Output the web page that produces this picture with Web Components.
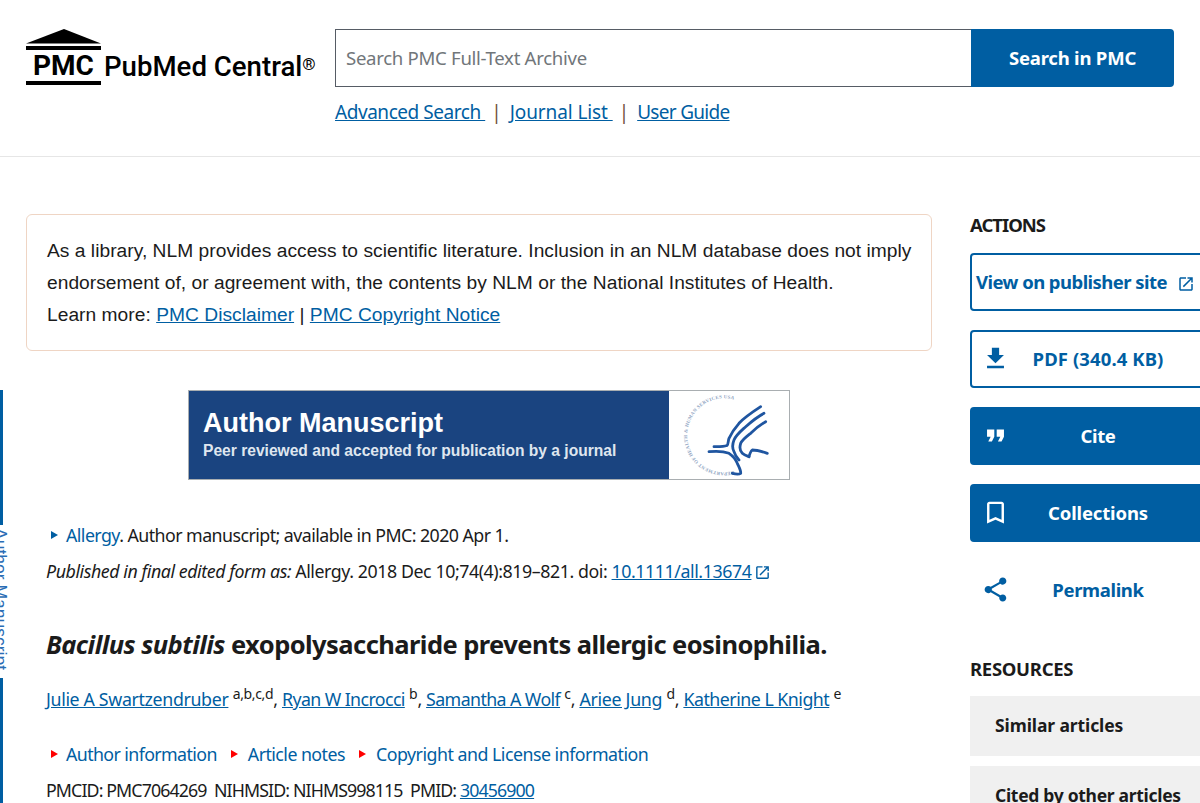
<!DOCTYPE html>
<html lang="en">
<head>
<meta charset="utf-8">
<title>PMC</title>
<style>
	html, body {
		margin: 0;
		height: 803px;
		overflow: hidden;
		background: #fff;
		color: #1b1b1b;
		font-family: "Noto Sans", sans-serif;
	}
</style>
</head>
<body>
<pmc-header></pmc-header>
<pmc-page>
	<pmc-notice></pmc-notice>
	<pmc-banner></pmc-banner>
	<pmc-article></pmc-article>
	<pmc-sidebar slot="side"></pmc-sidebar>
</pmc-page>

<script>
const icons = {
	launch: 'M19 19H5V5h7V3H5c-1.11 0-2 .9-2 2v14c0 1.1.89 2 2 2h14c1.1 0 2-.9 2-2v-7h-2v7zM14 3v2h3.59l-9.83 9.83 1.41 1.41L19 6.41V10h2V3h-7z',
	download: 'M19 9h-4V3H9v6H5l7 7 7-7zM5 18v2h14v-2H5z',
	quote: 'M6 17h3l2-4V7H5v6h3zm8 0h3l2-4V7h-6v6h3z',
	bookmark: 'M17 3H7c-1.1 0-1.99.9-1.99 2L5 21l7-3 7 3V5c0-1.1-.9-2-2-2zm0 15l-5-2.18L7 18V5h10v13z',
	share: 'M18 16.08c-.76 0-1.44.3-1.96.77L8.91 12.7c.05-.23.09-.46.09-.7s-.04-.47-.09-.7l7.05-4.11c.54.5 1.25.81 2.04.81 1.66 0 3-1.34 3-3s-1.34-3-3-3-3 1.34-3 3c0 .24.04.47.09.7L8.04 9.81C7.5 9.31 6.79 9 6 9c-1.66 0-3 1.34-3 3s1.34 3 3 3c.79 0 1.5-.31 2.04-.81l7.12 4.16c-.05.21-.08.43-.08.65 0 1.61 1.31 2.92 2.92 2.92 1.61 0 2.92-1.31 2.92-2.92s-1.31-2.92-2.92-2.92z'
};

const svgIcon = (name, size) =>
	`<svg width="${size}" height="${size}" viewBox="0 0 24 24" fill="currentColor"><path d="${icons[name]}"/></svg>`;

const sans = '"Noto Sans", sans-serif';

class PmcElement extends HTMLElement {
	constructor() {
		super();
		this.attachShadow({ mode: 'open' });
		this.shadowRoot.innerHTML = this.constructor.markup;
	}
}

class PmcLogo extends PmcElement {
	static markup = `
		<style>
			:host { display: flex; align-items: flex-start; width: 300px; color: #000; font-family: Roboto, sans-serif; }
			.mark { display: flex; flex-direction: column; align-items: center; width: 75px; }
			svg { display: block; }
			.pmc { font-size: 28px; font-weight: 700; line-height: 30px; margin-top: 1px; }
			.name { font-size: 27.600px; font-weight: 500; line-height: 30px; margin: 23px 0 0 3px; white-space: nowrap; }
			sup { font-size: 17px; font-weight: 400; line-height: 0; vertical-align: 6px; }
		</style>
		<div class="mark">
			<svg width="75" height="21" viewBox="0 0 75 21"><path d="M0 14.500 38 0 75 14.500z"/><rect y="17" width="75" height="4"/></svg>
			<div class="pmc">PMC</div>
			<svg width="75" height="4" viewBox="0 0 75 4"><rect width="75" height="4"/></svg>
		</div>
		<div class="name">PubMed Central<sup>®</sup></div>
	`;
}

class PmcSearch extends PmcElement {
	static markup = `
		<style>
			:host { display: block; width: 839px; font-family: ${sans}; }
			form { display: flex; height: 58px; margin: 0; }
			input {
				flex: 1; min-width: 0; box-sizing: border-box; height: 58px; border: 1px solid #565c65; border-right: 0;
				padding: 0 10px 2px; font: 18.600px ${sans}; letter-spacing: -.3px; color: #1b1b1b; outline: 0; border-radius: 0;
			}
			input::placeholder { color: #71767a; opacity: 1; }
			button {
				width: 203px; border: 0; background: #005ea2; color: #fff; border-radius: 0 4px 4px 0;
				font: 700 18.500px ${sans}; letter-spacing: -.2px; padding: 0 0 2px;
			}
			nav { display: flex; align-items: center; margin-top: 12px; font-size: 19px; line-height: 27px; letter-spacing: -.45px; }
			a { color: #005ea2; text-decoration: underline; white-space: pre; }
			a.j { letter-spacing: -.1px; }
			a.g { letter-spacing: -.7px; }
			i { font-style: normal; color: #71503c; margin: 0 8px 0 6px; letter-spacing: 0; }
		</style>
		<form><input placeholder="Search PMC Full-Text Archive"><button type="button">Search in PMC</button></form>
		<nav><a>Advanced Search </a><i>|</i><a class="j">Journal List </a><i>|</i><a class="g">User Guide</a></nav>
	`;
}

class PmcHeader extends PmcElement {
	static markup = `
		<style>
			:host { display: flex; align-items: flex-start; box-sizing: border-box; height: 157px; padding: 29px 0 0 26px; border-bottom: 1px solid #e6e6e6; }
			pmc-search { margin-left: 9px; }
		</style>
		<pmc-logo></pmc-logo>
		<pmc-search></pmc-search>
	`;
}

class PmcPage extends PmcElement {
	static markup = `
		<style>
			:host { display: grid; grid-template-columns: 906px 256px; column-gap: 38px; padding: 57px 0 0 26px; position: relative; }
			.rail { position: absolute; left: 0; top: 233px; }
			.left { min-width: 0; }
		</style>
		<pmc-rail class="rail"></pmc-rail>
		<div class="left"><slot></slot></div>
		<slot name="side"></slot>
	`;
}

class PmcRail extends PmcElement {
	static markup = `
		<style>
			:host { display: block; width: 10px; height: 420px; overflow: hidden; }
			.wrap { display: flex; flex-direction: column; align-items: flex-start; }
			.bar { width: 3px; background: #005ea2; flex: none; }
			.label {
				writing-mode: vertical-rl; font: 17.500px/18px "Liberation Sans", sans-serif; color: #2a6db5;
				height: 150px; white-space: nowrap; margin: 3px 0 0 -9px;
			}
		</style>
		<div class="wrap">
			<div class="bar" style="height:135px"></div>
			<div class="label">Author Manuscript</div>
			<div class="bar" style="height:125px"></div>
		</div>
	`;
}

class PmcNotice extends PmcElement {
	static markup = `
		<style>
			:host {
				display: block; box-sizing: border-box; height: 137px; padding: 20px 15px 0 20px; border: 1px solid #efd5c4; border-radius: 6px;
				font: 19.200px/32px "Liberation Sans", sans-serif; letter-spacing: .03px; color: #1b1b1b;
			}
			a { color: #005ea2; text-decoration: underline; }
		</style>
		As a library, NLM provides access to scientific literature. Inclusion in an NLM database does not imply endorsement of, or agreement with, the contents by NLM or the National Institutes of Health.<br>
		Learn more: <a>PMC Disclaimer</a> | <a>PMC Copyright Notice</a>
	`;
}

class PmcBanner extends PmcElement {
	static markup = `
		<style>
			:host {
				display: flex; box-sizing: border-box; width: 602px; height: 90px; margin: 39px 0 0 162px; border: 1px solid #a9aeb1;
				font-family: "Liberation Sans", sans-serif; font-weight: 700;
			}
			.blue { flex: 1; background: #1a4480; color: #fff; padding: 14px 0 0 14px; white-space: nowrap; }
			.t1 { font-size: 27px; line-height: 36px; }
			.t2 { font-size: 15.600px; line-height: 18px; color: #dfe6ef; margin-top: 1px; }
			.seal { width: 120px; flex: none; background: #fff; }
			svg { display: block; }
		</style>
		<div class="blue">
			<div class="t1">Author Manuscript</div>
			<div class="t2">Peer reviewed and accepted for publication by a journal</div>
		</div>
		<div class="seal">
			<svg width="120" height="88" viewBox="0 0 120 88">
				<defs><path id="ring" d="M65 80A37 37 0 1 1 84 21"/></defs>
				<text font-family="Liberation Serif, serif" font-size="4.800" fill="#8ea3bf" letter-spacing=".3">
					<textPath href="#ring">DEPARTMENT OF HEALTH &amp; HUMAN SERVICES USA</textPath>
				</text>
				<g fill="none" stroke="#1f55a0" stroke-width="2.800" stroke-linecap="round" stroke-linejoin="round">
					<path d="M91.700 15.700C82 22 75 27 70 32.300 65 38 62 43 60 47.300 59 50 59.500 53 58 54.500 54 56 49 55.700 45 55.700"/>
					<path d="M95 22.300C88 26 82 31 76.700 35.700 72 40 67 44 65 49 63 54 63 57 65 60.700 66 64 68 67 70 69"/>
					<path d="M96.700 30.700C91 34 86 38 81.700 42.300 77 46 73 49 71.700 52.300 70.500 56 71 60 73.300 62.300 75 64 78 65 80 65.700"/>
					<path d="M40 60.700C47 60 54 60 60 62.300 64 65 67 69 68.300 72.300 70 76 72 79 71.700 82.300 70 83.500 66 83 63.300 82.300"/>
					<path d="M80 65.700C81 62 82 60 83.300 59 88 59 93 60.500 98.300 62.300"/>
				</g>
			</svg>
		</div>
	`;
}

class PmcArticle extends PmcElement {
	static markup = `
		<style>
			:host { display: block; margin: 42px 0 0 20px; font-family: ${sans}; font-size: 17.800px; line-height: 26px; letter-spacing: -.35px; color: #1b1b1b; }
			a { color: #005ea2; }
			a.u { text-decoration: underline; }
			p, h1 { margin: 0; }
			.row { display: flex; align-items: center; white-space: pre; }
			.first { letter-spacing: -.55px; }
			.tri { width: 0; height: 0; border-left: 7px solid #005ea2; border-top: 4px solid transparent; border-bottom: 4px solid transparent; margin: 0 8px 0 5px; flex: none; }
			.tri.red { border-left-color: #f00; margin-right: 10px; }
			.pub { margin-top: 10px; letter-spacing: -.43px; white-space: nowrap; }
			.pub svg { vertical-align: -3px; margin-left: 3px; color: #005ea2; }
			h1 { margin-top: 43px; font-size: 25.500px; line-height: 34px; font-weight: 700; letter-spacing: -.56px; }
			.authors { margin-top: 25px; white-space: nowrap; }
			.authors .r, .authors .s { letter-spacing: -.6px; }
			.authors .j { letter-spacing: -.3px; }
			.authors .k { letter-spacing: -.5px; }
			sup { font-size: 14px; line-height: 0; vertical-align: 7px; }
			.info { margin-top: 29px; letter-spacing: -.6px; }
			.info .n { letter-spacing: -.55px; }
			.info .c { letter-spacing: -.5px; }
			.info .tri.red:first-child { margin-right: 8px; }
			.info span + .tri.red { margin-left: 14px; }
			.ids { margin-top: 10px; white-space: pre; letter-spacing: -.9px; }
		</style>
		<div class="row first"><span class="tri"></span><span><a>Allergy</a>. Author manuscript; available in PMC: 2020 Apr 1.</span></div>
		<p class="pub"><em>Published in final edited form as:</em> Allergy. 2018 Dec 10;74(4):819–821. doi: <a class="u">10.1111/all.13674</a>${svgIcon('launch', 17)}</p>
		<h1><em>Bacillus subtilis</em> exopolysaccharide prevents allergic eosinophilia.</h1>
		<p class="authors"><a class="u">Julie A Swartzendruber</a> <sup>a,b,c,d</sup>, <a class="u r">Ryan W Incrocci</a> <sup>b</sup>, <a class="u s">Samantha A Wolf</a> <sup>c</sup>, <a class="u j">Ariee Jung</a> <sup>d</sup>, <a class="u k">Katherine L Knight</a> <sup>e</sup></p>
		<div class="row info"><span class="tri red"></span><span><a>Author information</a></span><span class="tri red"></span><span class="n"><a>Article notes</a></span><span class="tri red"></span><span class="c"><a>Copyright and License information</a></span></div>
		<p class="ids">PMCID: PMC7064269  NIHMSID: NIHMS998115  PMID: <a class="u">30456900</a></p>
	`;
}

class PmcAction extends HTMLElement {
	constructor() {
		super();
		this.attachShadow({ mode: 'open' });
		const icon = this.getAttribute('icon');
		const size = this.getAttribute('icon-size') || 29;
		const spacing = this.getAttribute('spacing') || '-.35px';
		this.shadowRoot.innerHTML = `
			<style>
				:host {
					display: grid; grid-template-columns: 48px 1fr 48px; align-items: center; box-sizing: border-box; height: 58px; padding-bottom: 2px;
					border: 2px solid #005ea2; border-radius: 4px; color: #005ea2; background: #fff;
					font: 700 18.500px ${sans}; letter-spacing: ${spacing}; white-space: nowrap;
				}
				:host([variant=solid]) { background: #005ea2; color: #fff; }
				:host([variant=plain]) { border-color: transparent; background: transparent; }
				:host([variant=link]) { display: flex; padding-left: 4px; }
				.icon { display: flex; justify-content: center; padding-right: 2px; }
				svg { display: block; }
				.text { text-align: center; }
				:host([variant=link]) .text { text-align: left; }
				:host([variant=link]) .icon { margin: 6px 0 0 10px; padding: 0; }
			</style>
			${this.getAttribute('variant') === 'link'
				? `<span class="text"><slot></slot></span><span class="icon">${svgIcon(icon, size)}</span>`
				: `<span class="icon">${svgIcon(icon, size)}</span><span class="text"><slot></slot></span>`}
		`;
	}
}

class PmcResource extends PmcElement {
	static markup = `
		<style>
			:host {
				display: flex; align-items: center; box-sizing: border-box; height: 60px; padding: 0 0 2px 25px; background: #f0f0f0;
				font: 700 17.500px ${sans}; letter-spacing: -.1px; color: #1b1b1b; white-space: nowrap;
			}
		</style>
		<slot></slot>
	`;
}

class PmcSidebar extends PmcElement {
	static markup = `
		<style>
			:host { display: block; font-family: ${sans}; }
			h2 { margin: 0; font-size: 18.500px; line-height: 24px; font-weight: 700; letter-spacing: -.3px; color: #1b1b1b; }
			h2.a { margin-top: -1px; letter-spacing: -1px; }
			.list { display: flex; flex-direction: column; gap: 19px; margin-top: 16px; }
			.res { display: flex; flex-direction: column; gap: 10px; margin-top: 15px; }
			.second { margin-top: 38px; }
		</style>
		<h2 class="a">ACTIONS</h2>
		<div class="list">
			<pmc-action variant="link" icon="launch" icon-size="18" spacing="-.55px">View on publisher site</pmc-action>
			<pmc-action icon="download" spacing=".1px">PDF (340.4 KB)</pmc-action>
			<pmc-action variant="solid" icon="quote">Cite</pmc-action>
			<pmc-action variant="solid" icon="bookmark" spacing="-.15px">Collections</pmc-action>
			<pmc-action variant="plain" icon="share">Permalink</pmc-action>
		</div>
		<h2 class="second">RESOURCES</h2>
		<div class="res">
			<pmc-resource>Similar articles</pmc-resource>
			<pmc-resource style="letter-spacing:-.3px">Cited by other articles</pmc-resource>
		</div>
	`;
}

customElements.define('pmc-logo', PmcLogo);
customElements.define('pmc-search', PmcSearch);
customElements.define('pmc-header', PmcHeader);
customElements.define('pmc-page', PmcPage);
customElements.define('pmc-rail', PmcRail);
customElements.define('pmc-notice', PmcNotice);
customElements.define('pmc-banner', PmcBanner);
customElements.define('pmc-article', PmcArticle);
customElements.define('pmc-action', PmcAction);
customElements.define('pmc-resource', PmcResource);
customElements.define('pmc-sidebar', PmcSidebar);
</script>
</body>
</html>
